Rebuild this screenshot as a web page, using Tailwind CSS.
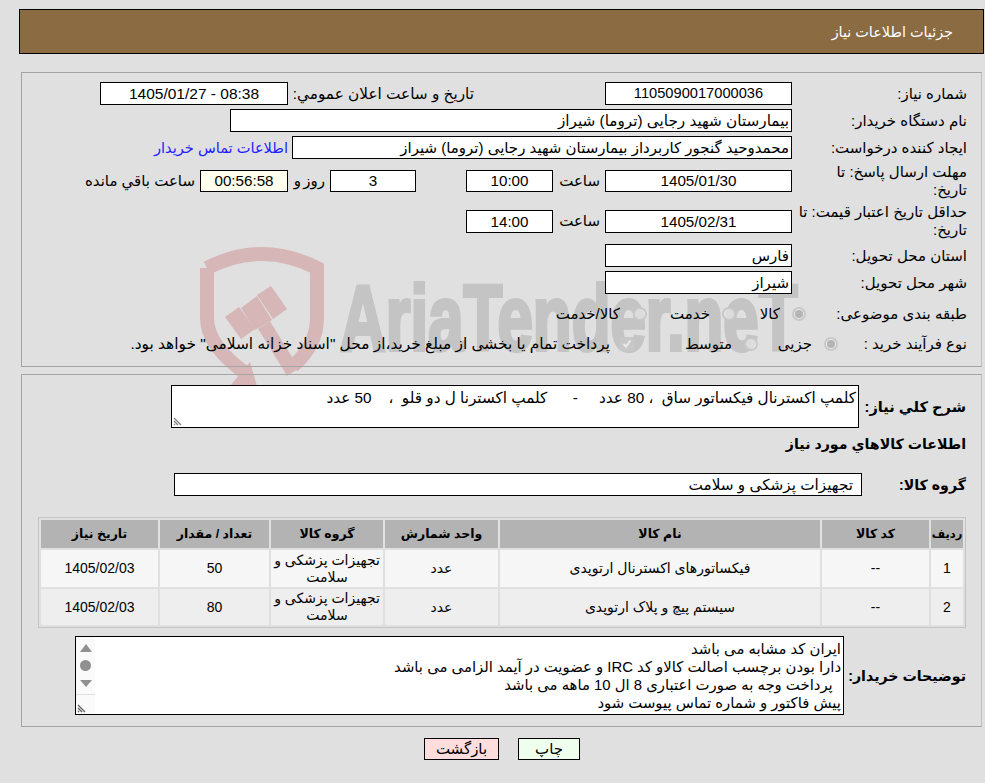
<!DOCTYPE html>
<html lang="fa" dir="rtl">
<head>
<meta charset="UTF-8">
<title>جزئیات اطلاعات نیاز</title>
<script src="https://cdn.jsdelivr.net/npm/@tailwindcss/browser@4"></script>
</head>
<body class="bg-[#e0e0e0] text-[15px] leading-[18px] text-black font-['Liberation_Sans','DejaVu_Sans',sans-serif]">
<div class="relative w-[985px] h-[783px] overflow-hidden pt-[9px]">

  <!-- watermark -->
  <div class="absolute left-0 top-0 w-[985px] h-[400px]">
    <svg class="absolute left-0 top-0" width="400" height="400" viewBox="0 0 400 400">
      <path d="M207 268 Q262 240 317 268 V318 Q317 345 293 366" fill="none" stroke="#d6b6b6" stroke-width="14"/>
      <path d="M207 268 V318 Q207 345 244 372" fill="none" stroke="#d6b6b6" stroke-width="14"/>
      <path d="M250 362 L257 386 L230 386 Z" fill="#d6b6b6"/>
      <polygon points="225,317 239,307 255,329 241,339" fill="#d6b6b6"/>
      <polygon points="241,308 257,296 272,320 255,330" fill="#d6b6b6"/>
      <polygon points="257,295 271,286 287,309 273,319" fill="#d6b6b6"/>
      <path d="M264 325 L293 372" fill="none" stroke="#d6b6b6" stroke-width="14"/>
    </svg>
    <span dir="ltr" class="absolute left-[340px] top-[268px] origin-left scale-x-[0.69] whitespace-nowrap text-[92px] leading-[100px] font-bold text-[#c4c4c4] [-webkit-text-stroke:4px_#c4c4c4] font-['Liberation_Sans',sans-serif]">AriaTender.neT</span>
  </div>

  <div class="relative">
    <!-- title bar -->
    <div class="mr-[1px] w-[965px] h-[45px] border border-black bg-[#8b6b42] flex items-center pr-[30px] text-white text-[14.4px]">جزئیات اطلاعات نیاز</div>

    <!-- main form -->
    <div class="mt-[18px] mr-[3px] w-[961px] h-[295px] border border-[#a4a4a4] border-r-[#c0c0c0] pt-[9px] pr-[14px]">
      <div class="flex items-center h-[23px]">
        <div class="w-[175px] shrink-0">شماره نیاز:</div>
        <div class="w-[187px] h-[23px] border border-black bg-white text-center text-[14.67px] leading-[21px]">1105090017000036</div>
        <div class="w-[317px] pr-[131px] whitespace-nowrap text-[15.3px]">تاریخ و ساعت اعلان عمومي:</div>
        <div class="w-[188px] h-[23px] border border-black bg-white text-center text-[15.5px] leading-[21px]" dir="ltr">1405/01/27 - 08:38</div>
      </div>
      <div class="flex items-center h-[23px] mt-[4px]">
        <div class="w-[175px] shrink-0">نام دستگاه خریدار:</div>
        <div class="w-[562px] h-[23px] border border-black bg-white pr-[2px] text-[15.25px] leading-[21px]">بیمارستان شهید رجایی (تروما) شیراز</div>
      </div>
      <div class="flex items-center h-[23px] mt-[4px]">
        <div class="w-[175px] shrink-0">ایجاد کننده درخواست:</div>
        <div class="w-[500px] h-[23px] border border-black bg-white pr-[2px] leading-[21px]">محمدوحید گنجور کاربرداز بیمارستان شهید رجایی (تروما) شیراز</div>
        <a class="mr-[4px] text-[#2020ff] whitespace-nowrap text-[14.6px]">اطلاعات تماس خریدار</a>
      </div>
      <div class="flex items-center h-[38px] mt-[3px]">
        <div class="w-[175px] shrink-0">مهلت ارسال پاسخ: تا<br>تاریخ:</div>
        <div class="w-[187px] h-[22px] border border-black bg-white text-center text-[15.2px] leading-[20px]">1405/01/30</div>
        <div class="w-[52px] pr-[5px]">ساعت</div>
        <div class="w-[87px] h-[22px] border border-black bg-white text-center text-[15.2px] leading-[20px]">10:00</div>
        <div class="w-[50px]"></div>
        <div class="w-[86px] h-[22px] border border-black bg-white text-center text-[15.2px] leading-[20px]">3</div>
        <div class="w-[42px] pr-[5px] whitespace-nowrap [word-spacing:-2px]">روز و</div>
        <div class="w-[88px] h-[22px] border border-black bg-[#ffffee] text-center text-[15.2px] leading-[20px]">00:56:58</div>
        <div class="pr-[5px] whitespace-nowrap">ساعت باقي مانده</div>
      </div>
      <div class="flex items-center h-[38px] mt-[2px]">
        <div class="w-[175px] shrink-0">حداقل تاریخ اعتبار قیمت: تا<br>تاریخ:</div>
        <div class="w-[187px] h-[23px] border border-black bg-white text-center text-[15.2px] leading-[21px]">1405/02/31</div>
        <div class="w-[52px] pr-[5px]">ساعت</div>
        <div class="w-[87px] h-[23px] border border-black bg-white text-center text-[15.2px] leading-[21px]">14:00</div>
      </div>
      <div class="flex items-center h-[23px] mt-[4px]">
        <div class="w-[175px] shrink-0">استان محل تحویل:</div>
        <div class="w-[187px] h-[23px] border border-black bg-white pr-[2px] leading-[21px]">فارس</div>
      </div>
      <div class="flex items-center h-[23px] mt-[4px]">
        <div class="w-[175px] shrink-0">شهر محل تحویل:</div>
        <div class="w-[187px] h-[23px] border border-black bg-white pr-[2px] leading-[21px]">شیراز</div>
      </div>
      <div class="flex items-center h-[28px] mt-[6px]">
        <div class="w-[161px] shrink-0">طبقه بندی موضوعی:</div>
        <div class="w-[14px] h-[14px] rounded-full border-2 border-[#c8c8c8] bg-[#e8e8e8] flex items-center justify-center"><div class="w-[8px] h-[8px] rounded-full bg-[#b4b4b4]"></div></div>
        <div class="w-[56px] pr-[12px]">کالا</div>
        <div class="w-[14px] h-[14px] rounded-full border-2 border-[#c8c8c8] bg-[#ececec]/60"></div>
        <div class="w-[75px] pr-[12px] whitespace-nowrap">خدمت</div>
        <div class="w-[14px] h-[14px] rounded-full border-2 border-[#c8c8c8] bg-[#ececec]/60"></div>
        <div class="pr-[13px] whitespace-nowrap">کالا/خدمت</div>
      </div>
      <div class="flex items-center h-[28px] mt-[2px]">
        <div class="w-[129px] shrink-0">نوع فرآیند خرید :</div>
        <div class="w-[14px] h-[14px] rounded-full border-2 border-[#c8c8c8] bg-[#e8e8e8] flex items-center justify-center"><div class="w-[8px] h-[8px] rounded-full bg-[#b4b4b4]"></div></div>
        <div class="w-[66px] pr-[12px]">جزیی</div>
        <div class="w-[14px] h-[14px] rounded-full border-2 border-[#c8c8c8] bg-[#ececec]/60"></div>
        <div class="w-[110px] pr-[12px] whitespace-nowrap">متوسط</div>
        <div class="w-[14px] h-[14px] rounded-[2px] bg-[#c8c8c8] flex items-center justify-center">
          <svg width="10" height="10" viewBox="0 0 10 10"><path d="M1.5 5 L4 7.5 L8.5 1.5" fill="none" stroke="#ececec" stroke-width="2"/></svg>
        </div>
        <div class="pr-[10px] whitespace-nowrap text-[15.4px]">پرداخت تمام یا بخشی از مبلغ خرید،از محل "اسناد خزانه اسلامی" خواهد بود.</div>
      </div>
    </div>

    <!-- items -->
    <div class="mt-[7px] mr-[3px] w-[961px] h-[353px] border border-[#a4a4a4] border-r-[#c0c0c0] pt-[10px] pr-[15px]">
      <div class="flex items-center h-[43px]">
        <div class="w-[107px] shrink-0 font-bold text-[14.6px] whitespace-nowrap">شرح کلي نیاز:</div>
        <div class="relative w-[688px] h-[43px] border border-black bg-white pr-[2px] pt-[3px] whitespace-pre text-[15.25px]">کلمپ اکسترنال فیکساتور ساق  ، 80 عدد     -      کلمپ اکسترنا ل دو قلو  ،    50 عدد
          <svg class="absolute left-[1px] bottom-[1px]" width="10" height="10" viewBox="0 0 10 10"><path d="M1 2 L8 9 M1 5 L5 9 M1 8 L2 9" stroke="#808080" stroke-width="1.3" fill="none"/></svg>
        </div>
      </div>
      <div class="font-bold text-[14.2px] h-[20px] mt-[6px] leading-[20px]">اطلاعات کالاهاي مورد نياز</div>
      <div class="flex items-center h-[23px] mt-[19px]">
        <div class="w-[104px] shrink-0 font-bold text-[14.2px] whitespace-nowrap">گروه کالا:</div>
        <div class="w-[688px] h-[23px] border border-black bg-white pr-[8px] text-[15.25px] leading-[21px]">تجهیزات پزشکی و سلامت</div>
      </div>

      <table class="mt-[21px] w-[928px] table-fixed border-separate border-spacing-[2px] border border-[#c4c4c4] text-center text-[14px] leading-[17px]">
        <colgroup>
          <col class="w-[32px]"><col class="w-[107px]"><col class="w-[320px]"><col class="w-[113px]"><col class="w-[112px]"><col class="w-[109px]"><col>
        </colgroup>
        <thead>
          <tr class="h-[28px] bg-[#b3b3b3] font-bold text-[12.5px]">
            <th class="p-0 whitespace-nowrap text-[11.5px]">ردیف</th><th class="p-0">کد کالا</th><th class="p-0">نام کالا</th><th class="p-0">واحد شمارش</th><th class="p-0">گروه کالا</th><th class="p-0">تعداد / مقدار</th><th class="p-0">تاریخ نیاز</th>
          </tr>
        </thead>
        <tbody>
          <tr class="h-[37px] bg-[#f6f6f6]">
            <td class="p-0">1</td><td class="p-0">--</td><td class="p-0">فیکساتورهای اکسترنال ارتوپدی</td><td class="p-0">عدد</td><td class="p-0">تجهیزات پزشکی و سلامت</td><td class="p-0">50</td><td class="p-0">1405/02/03</td>
          </tr>
          <tr class="h-[36px] bg-[#eeeeee]">
            <td class="p-0">2</td><td class="p-0">--</td><td class="p-0">سیستم پیچ و پلاک ارتوپدی</td><td class="p-0">عدد</td><td class="p-0">تجهیزات پزشکی و سلامت</td><td class="p-0">80</td><td class="p-0">1405/02/03</td>
          </tr>
        </tbody>
      </table>

      <div class="flex items-center h-[79px] mt-[8px]">
        <div class="w-[122px] shrink-0 font-bold text-[14.2px] whitespace-nowrap">توضیحات خریدار:</div>
        <div class="relative w-[769px] h-[79px] border border-black bg-white pr-[2px] pt-[3px] whitespace-pre text-[14.87px]">ایران کد مشابه می باشد
دارا بودن برچسب اصالت کالاو کد IRC و عضویت در آیمد الزامی می باشد
  پرداخت وجه به صورت اعتباری 8 ال 10 ماهه می باشد
پیش فاکتور و شماره تماس پیوست شود
          <div class="absolute left-0 top-0 bottom-0 w-[19px] bg-[#fafafa] flex flex-col items-center">
            <div class="mt-[7px] w-0 h-0 border-x-[6.5px] border-x-transparent border-b-[8px] border-b-[#909090]"></div>
            <div class="mt-[8px] w-[11px] h-[11px] rounded-full bg-[#909090]"></div>
            <div class="mt-[9px] w-0 h-0 border-x-[6.5px] border-x-transparent border-t-[7px] border-t-[#909090]"></div>
            <div class="absolute left-0 right-0 bottom-[19px] h-px bg-[#e0e0e0]"></div>
            <svg class="absolute left-[1px] bottom-[1px]" width="10" height="10" viewBox="0 0 10 10"><path d="M1 2 L8 9 M1 5 L5 9 M1 8 L2 9" stroke="#606060" stroke-width="1.3" fill="none"/></svg>
          </div>
        </div>
      </div>
    </div>

    <!-- buttons -->
    <div class="flex justify-center gap-[19px] mt-[11px] mr-[405px] w-[156px]">
      <div class="w-[62px] h-[22px] shrink-0 border border-black bg-[#eeffee] text-center leading-[20px]">چاپ</div>
      <div class="w-[75px] h-[22px] shrink-0 border border-black bg-[#ffdddd] text-center leading-[20px]">بازگشت</div>
    </div>
  </div>
</div>
</body>
</html>
